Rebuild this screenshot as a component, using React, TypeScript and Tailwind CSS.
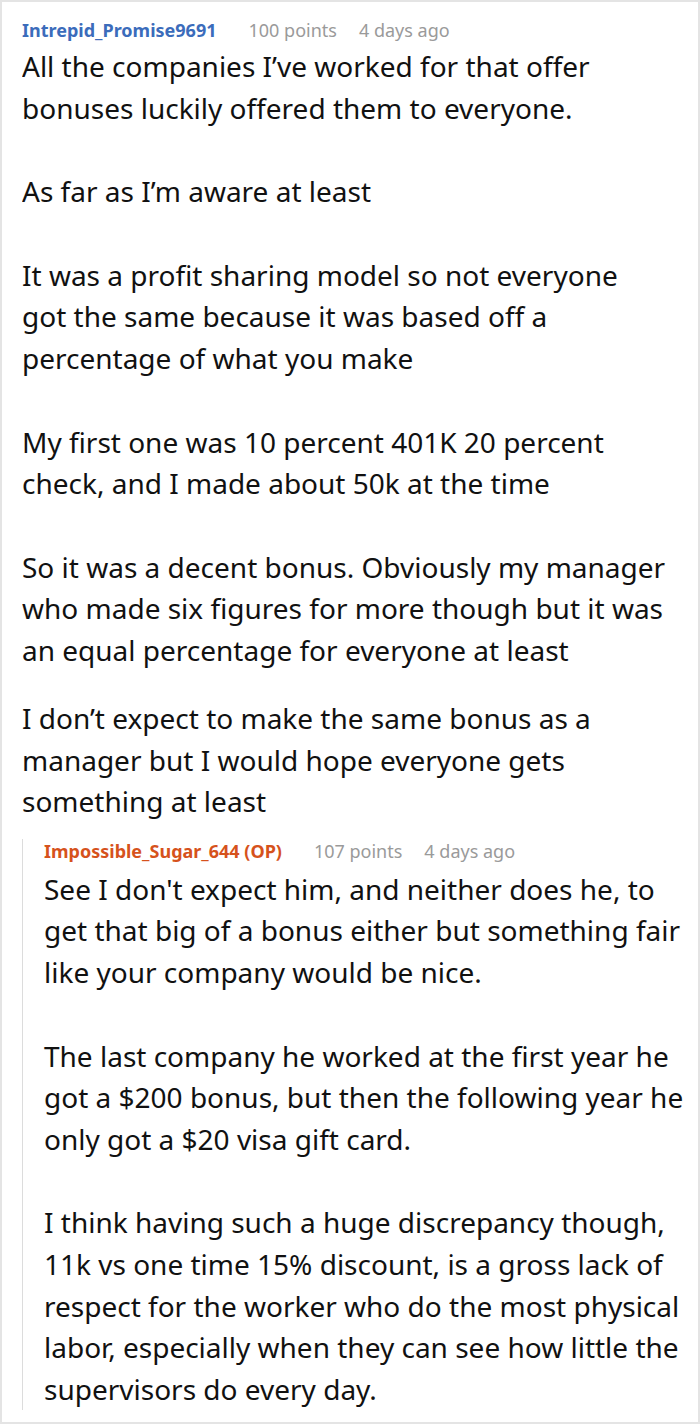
const firstTop = [
  ["All the companies I’ve worked for that offer", "bonuses luckily offered them to everyone."],
  ["As far as I’m aware at least"],
  ["It was a profit sharing model so not everyone", "got the same because it was based off a", "percentage of what you make"],
  ["My first one was 10 percent 401K 20 percent", "check, and I made about 50k at the time"],
  ["So it was a decent bonus. Obviously my manager", "who made six figures for more though but it was", "an equal percentage for everyone at least"],
];

const firstBottom = [
  ["I don’t expect to make the same bonus as a", "manager but I would hope everyone gets", "something at least"],
];

const reply = [
  ["See I don't expect him, and neither does he, to", "get that big of a bonus either but something fair", "like your company would be nice."],
  ["The last company he worked at the first year he", "got a $200 bonus, but then the following year he", "only got a $20 visa gift card."],
  [
    "I think having such a huge discrepancy though,",
    "11k vs one time 15% discount, is a gross lack of",
    "respect for the worker who do the most physical",
    "labor, especially when they can see how little the",
    "supervisors do every day.",
  ],
];

const Paragraphs = ({ items }: { items: string[][] }) => (
  <div className="flex flex-col gap-[42px]">
    {items.map((lines, i) => (
      <p key={i} className="whitespace-nowrap">
        {lines.map((l, j) => (
          <span key={j} className="block">
            {l}
          </span>
        ))}
      </p>
    ))}
  </div>
);

const Meta = ({
  name,
  points,
  color,
}: {
  name: string;
  points: string;
  color: string;
}) => (
  <div className="flex h-6 items-center text-lg leading-6">
    <span className={`font-bold ${color}`}>{name}</span>
    <span className="ml-8 text-[#9a9a9a]">{points}</span>
    <span className="ml-[22px] text-[#9a9a9a]">4 days ago</span>
  </div>
);

export default function App() {
  return (
    <div className="h-[1424px] w-[700px] overflow-hidden bg-white font-['Noto_Sans',sans-serif] text-[#111]">
      <div className="h-[1424px] border-2 border-[#e4e4e4] pt-4 pl-5">
        <Meta
          name="Intrepid_Promise9691"
          points="100 points"
          color="text-[#3b6cbb]"
        />
        <div className="mt-1 text-[28px] leading-[41.6px]">
          <div className="h-[622px] overflow-hidden">
            <Paragraphs items={firstTop} />
          </div>
          <div className="mt-[30px]">
            <Paragraphs items={firstBottom} />
          </div>
        </div>

        <div className="mt-7 border-l border-[#dcdcdc] pl-[21px]">
          <div className="-mt-3">
            <Meta
              name="Impossible_Sugar_644 (OP)"
              points="107 points"
              color="text-[#d6521c]"
            />
          </div>
          <div className="mt-1.5 text-[28px] leading-[41.6px]">
            <Paragraphs items={reply} />
          </div>
        </div>
      </div>
    </div>
  );
}
